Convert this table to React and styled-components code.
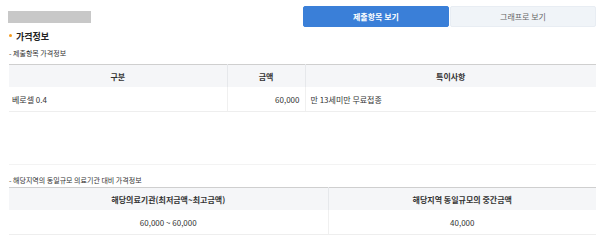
import React from 'react'
import styled, { createGlobalStyle } from 'styled-components'

const GlobalStyle = createGlobalStyle`
  body {
    margin: 0;
    background: #fff;
    font-family: "Noto Sans CJK KR", "Noto Sans", sans-serif;
    color: #333;
  }
`

const Page = styled.div`
  padding: 6px 4px 0 9px;
  width: 600px;
  box-sizing: border-box;
`

const TopRow = styled.div`
  display: flex;
  align-items: center;
  justify-content: space-between;
  height: 21px;
`

const Placeholder = styled.div`
  width: 83px;
  height: 12px;
  margin-left: -1px;
  background: #c8c8c8;
`

const Tabs = styled.div`
  display: flex;
  gap: 1px;
  height: 21px;
`

const Tab = styled.button`
  width: 146px;
  height: 21px;
  border: 1px solid ${(p) => (p.active ? '#3a7fd8' : '#e8edf3')};
  border-radius: 2px;
  background: ${(p) => (p.active ? '#3a7fd8' : '#f0f4f8')};
  color: ${(p) => (p.active ? '#fff' : '#666')};
  font-family: inherit;
  font-size: 8px;
  font-weight: ${(p) => (p.active ? 700 : 400)};
  padding: 0;
  cursor: pointer;
`

const Heading = styled.h2`
  display: flex;
  align-items: center;
  gap: 4px;
  margin: 2px 0 0;
  height: 14px;
  font-size: 9px;
  font-weight: 700;
  color: #222;

  &::before {
    content: '';
    width: 3px;
    height: 3px;
    border-radius: 50%;
    background: #f59a1b;
    margin-bottom: 1px;
  }
`

const Note = styled.p`
  margin: ${(p) => p.top || 4}px 0 0;
  height: 12px;
  line-height: 12px;
  font-size: 7px;
  color: #333;
`

const Table = styled.table`
  width: 587px;
  margin-top: ${(p) => p.top || 5}px;
  border-collapse: collapse;
  table-layout: fixed;
  border-top: 1px solid #cfcfcf;
  font-size: 8px;

  th {
    height: 22px;
    padding: 0;
    background: #f5f6f8;
    font-weight: 700;
    color: #333;
    border-left: 1px solid #e6e8eb;
  }

  td {
    height: 24px;
    padding: 0 5px;
    color: #333;
    border-bottom: 1px solid #eeeeee;
    border-left: 1px solid #f0f0f0;
  }

  th:first-child,
  td:first-child {
    border-left: none;
  }
`

const Cell = styled.td`
  text-align: ${(p) => p.align || 'left'};
  && {
    padding-left: ${(p) => (p.align === 'left' ? '3px' : '5px')};
  }
`

const Divider = styled.div`
  width: 587px;
  height: 1px;
  margin-top: 52px;
  background: #f3f3f3;
`

export default function App() {
  return (
    <Page>
      <GlobalStyle />
      <TopRow>
        <Placeholder />
        <Tabs>
          <Tab active>제출항목 보기</Tab>
          <Tab>그래프로 보기</Tab>
        </Tabs>
      </TopRow>

      <Heading>가격정보</Heading>
      <Note>- 제출항목 가격정보</Note>
      <Table>
        <colgroup>
          <col style={{ width: 218 }} />
          <col style={{ width: 78 }} />
          <col />
        </colgroup>
        <thead>
          <tr>
            <th>구분</th>
            <th>금액</th>
            <th>특이사항</th>
          </tr>
        </thead>
        <tbody>
          <tr>
            <Cell align="left">베로셀 0.4</Cell>
            <Cell align="right">60,000</Cell>
            <Cell>만 13세미만 무료접종</Cell>
          </tr>
        </tbody>
      </Table>

      <Divider />
      <Note top={9}>- 해당지역의 동일규모 의료기관 대비 가격정보</Note>
      <Table top={1}>
        <colgroup>
          <col style={{ width: 319 }} />
          <col />
        </colgroup>
        <thead>
          <tr>
            <th>해당의료기관(최저금액~최고금액)</th>
            <th>해당지역 동일규모의 중간금액</th>
          </tr>
        </thead>
        <tbody>
          <tr>
            <Cell align="center">60,000 ~ 60,000</Cell>
            <Cell align="center">40,000</Cell>
          </tr>
        </tbody>
      </Table>
    </Page>
  )
}
